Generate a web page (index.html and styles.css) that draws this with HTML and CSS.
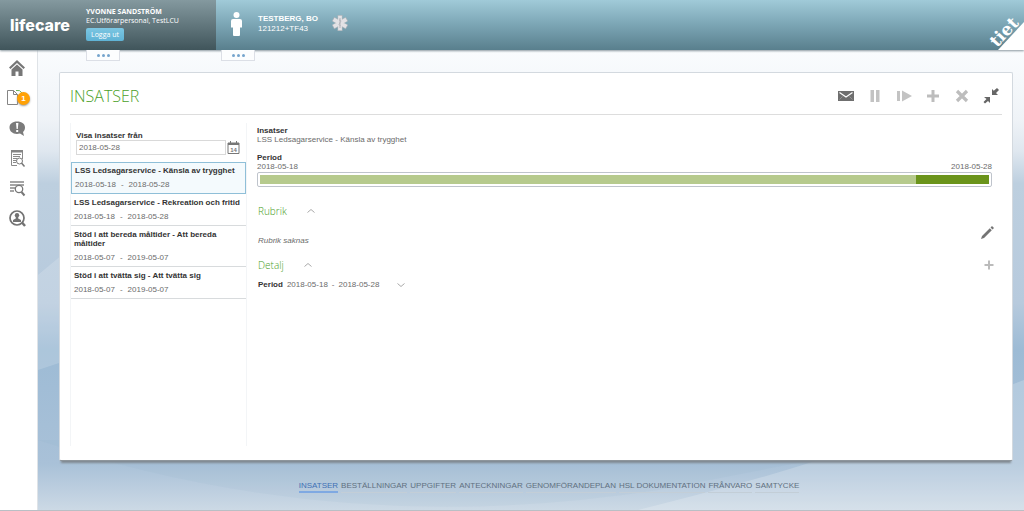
FILE: index.html
```
<!DOCTYPE html>
<html lang="sv">
<head>
<meta charset="utf-8">
<title>Lifecare - Insatser</title>
<link rel="stylesheet" href="styles.css">
</head>
<body>
<div class="page">
  <header class="topbar">
    <div class="user">
      <div class="brand">lifecare</div>
      <div class="user-info">
        <strong>YVONNE SANDSTRÖM</strong>
        <span>EC.Utförarpersonal, TestLCU</span>
        <button class="logout" type="button">Logga ut</button>
      </div>
      <button class="tab" type="button" aria-label="Mer om användaren"><i></i><i></i><i></i></button>
    </div>
    <div class="client">
      <svg class="person" viewBox="0 0 11 24" aria-hidden="true"><circle cx="5.500" cy="3" r="3" fill="#fff"/><path fill="#fff" d="M2 7h7q2 0 2 2v6.500H9V23q0 1-1 1H3q-1 0-1-1v-7.500H0V9q0-2 2-2z"/></svg>
      <div class="client-info"><strong>TESTBERG, BO</strong><span>121212+TF43</span></div>
      <svg class="star" viewBox="0 0 16 16" aria-hidden="true"><g stroke="#a9b3ba" stroke-width="5"><path d="M8 0v16M1 4l14 8M15 4L1 12"/></g><g stroke="#e3e2e5" stroke-width="3.800"><path d="M8 .7v14.600M1.600 4.300l12.800 7.400M14.400 4.300L1.600 11.700"/></g><path d="M8 3v10M7 5q3 0 1 2.500T8.500 11" stroke="#b4b5bb" fill="none"/></svg>
      <svg class="corner" viewBox="0 0 40 50" role="img" aria-label="tieto"><path fill="#fff" d="M14 50L40 22v28z"/><text class="corner-text" transform="translate(13 48) rotate(-47)">tiet</text></svg>
      <button class="tab" type="button" aria-label="Mer om klienten"><i></i><i></i><i></i></button>
    </div>
  </header>
  <div class="body">
    <nav class="rail" aria-label="Huvudmeny">
      <a href="#" aria-label="Hem"><svg viewBox="0 0 18 18"><path fill="#777" d="M9 1l8 7.500-1.500 1.500L9 4 2.500 10 1 8.500z"/><path fill="#777" d="M3.500 10.500L9 5.500l5.500 5V17h-4v-4.500h-3V17h-4z"/></svg></a>
      <a href="#" aria-label="Dokument"><svg class="wide" viewBox="0 0 18 18"><path fill="#fff" stroke="#858585" d="M-.500 1.500h6l4 4v10h-10z"/><path d="M5.500 1.500v4h4" fill="none" stroke="#858585"/><path d="M8 1.500q4-1 6 2.500" fill="none" stroke="#69b35b"/></svg><span class="badge">1</span></a>
      <a href="#" aria-label="Meddelanden"><svg viewBox="0 0 18 18"><path fill="#7b7b7b" d="M9 2.500c5 0 8 2.500 8 6 0 2-1 3.500-2 4.500l1 4-4-2.500c-6 1.500-10.500-1.500-10.500-6 0-3.500 3-6 7.500-6z"/><path fill="#fff" d="M8 4h2.400L9.800 10H8.600zM8.200 11h2v2h-2z"/></svg></a>
      <a href="#" aria-label="Journal"><svg viewBox="0 0 18 18"><path d="M3.500 1.500h11V10M9 16.500H3.500v-15" fill="none" stroke="#8a8a8a"/><path d="M3 1h12v2.500H3z" fill="#858585"/><path d="M5 5.500h8M5 7.500h7M5 9.500h4M5 11.500h3M5 13.500h3" stroke="#8a8a8a"/><circle cx="11.500" cy="12" r="3" fill="#fff" stroke="#777"/><path d="M13.500 14l3 3.500" stroke="#777" stroke-width="1.500"/></svg></a>
      <a href="#" aria-label="Sök i listan"><svg viewBox="0 0 18 18"><path d="M2 3h14M2 6h14M2 9h5M2 12h4" stroke="#888" stroke-width="1.300"/><circle cx="11" cy="10" r="3.700" fill="#fff" stroke="#777" stroke-width="1.300"/><path d="M13.500 13l3 3.500" stroke="#777" stroke-width="2"/></svg></a>
      <a href="#" aria-label="Sök person"><svg viewBox="0 0 18 18"><circle cx="9" cy="9" r="7" fill="#fff" stroke="#737373" stroke-width="1.700"/><path d="M14 13.500l3 3.500" stroke="#737373" stroke-width="2.500"/><circle cx="9" cy="6.200" r="2.200" fill="#737373"/><path fill="#737373" d="M7.800 8h2.400v1.500l2.800 1.500v2H5v-2l2.800-1.500z"/></svg></a>
    </nav>
    <div class="stage">
      <svg class="backdrop" viewBox="0 0 986 460" preserveAspectRatio="none" aria-hidden="true">
        <path fill="#fff" fill-opacity=".16" d="M0 225L30 200V310L0 320z"/>
        <path fill="#fff" fill-opacity=".2" d="M600 460Q720 430 780 410L986 330V460z"/>
        <path fill="#7fa3c4" fill-opacity=".08" d="M0 390Q300 490 620 440L800 405 300 390z"/>
      </svg>
      <main class="panel">
        <div class="panel-head">
          <h1>INSATSER</h1>
          <div class="tools">
            <button type="button" aria-label="Meddelande"><svg viewBox="0 0 16 16"><path fill="#6f6f6f" d="M0 3h16v10H0z"/><path d="M1.500 4.500L8 9l6.500-4.500" fill="none" stroke="#fff" stroke-width="1.200"/><path d="M1.500 11.500l3-3M14.500 11.500l-3-3" fill="none" stroke="#aaa" stroke-width=".6"/></svg></button>
            <button type="button" aria-label="Pausa"><svg viewBox="0 0 16 16"><path fill="#c3c3c3" d="M3.500 2H7v12H3.500zM9 2h3.500v12H9z"/></svg></button>
            <button type="button" aria-label="Återuppta"><svg viewBox="0 0 16 16"><path fill="#c3c3c3" d="M1 3h3v10H1zM6 2.500L16 8 6 13.500z"/></svg></button>
            <button type="button" aria-label="Lägg till"><svg viewBox="0 0 16 16"><path fill="#bdbdbd" d="M6.500 2h3v4.500H14v3H9.500V14h-3V9.500H2v-3h4.500z"/></svg></button>
            <button type="button" aria-label="Ta bort"><svg viewBox="0 0 16 16"><path d="M3 3l10 10M13 3L3 13" stroke="#bdbdbd" stroke-width="3.200"/></svg></button>
            <button type="button" aria-label="Förminska"><svg viewBox="0 0 16 16"><path fill="#666" d="M9 1l1.800 1.800L14 0l2 2-3 3 2 2H9zM1 9h6v6l-2-2-3 2.500L.500 14l3-3z"/></svg></button>
          </div>
        </div>
        <div class="columns">
          <section class="list">
            <div class="filter">
              <label for="from">Visa insatser från</label>
              <div class="date-row">
                <input id="from" type="text" value="2018-05-28">
                <button type="button" aria-label="Välj datum"><svg viewBox="0 0 13 13"><path d="M1 2h11v10.500H1z" fill="#fff" stroke="#777"/><path fill="#777" d="M1 2h11v2H1z"/><path d="M3.500 0v3M9.500 0v3" stroke="#777"/><text class="cal-text" x="6.500" y="11" text-anchor="middle">14</text></svg></button>
              </div>
            </div>
            <a class="item selected" href="#"><strong>LSS Ledsagarservice - Känsla av trygghet</strong><span class="range"><span>2018-05-18</span><span>-</span><span>2018-05-28</span></span></a>
            <a class="item" href="#"><strong>LSS Ledsagarservice - Rekreation och fritid</strong><span class="range"><span>2018-05-18</span><span>-</span><span>2018-05-28</span></span></a>
            <a class="item" href="#"><strong>Stöd i att bereda måltider - Att bereda måltider</strong><span class="range"><span>2018-05-07</span><span>-</span><span>2019-05-07</span></span></a>
            <a class="item" href="#"><strong>Stöd i att tvätta sig - Att tvätta sig</strong><span class="range"><span>2018-05-07</span><span>-</span><span>2019-05-07</span></span></a>
          </section>
          <section class="detail">
            <dl class="facts">
              <dt>Insatser</dt><dd>LSS Ledsagarservice - Känsla av trygghet</dd>
              <dt>Period</dt><dd class="ends"><span>2018-05-18</span><span>2018-05-28</span></dd>
            </dl>
            <div class="bar"><div class="bar-past"></div><div class="bar-now"></div></div>
            <div class="section-head">
              <h2>Rubrik</h2>
              <button type="button" aria-label="Fäll ihop"><svg viewBox="0 0 8 8"><path d="M.500 5.500L4 2.500l3.500 3" fill="none" stroke="#aaa"/></svg></button>
            </div>
            <div class="empty-row">
              <em>Rubrik saknas</em>
              <button type="button" aria-label="Redigera"><svg viewBox="0 0 14 14"><path fill="#747474" d="M1 13l1-3L9.800 2.200l2 2L4 12zM10.500 1.500L12 0l2 2-1.500 1.500z"/></svg></button>
            </div>
            <div class="section-head detail-head">
              <h2>Detalj</h2>
              <button type="button" aria-label="Fäll ihop"><svg viewBox="0 0 8 8"><path d="M.500 5.500L4 2.500l3.500 3" fill="none" stroke="#aaa"/></svg></button>
              <button class="add" type="button" aria-label="Lägg till"><svg viewBox="0 0 10 10"><path d="M5 .500v9M.500 5h9" stroke="#bbb" stroke-width="2"/></svg></button>
            </div>
            <div class="period-row">
              <strong>Period</strong>
              <span class="range"><span>2018-05-18</span><span>-</span><span>2018-05-28</span></span>
              <button type="button" aria-label="Visa mer"><svg viewBox="0 0 8 8"><path d="M.500 2.500L4 5.500l3.500-3" fill="none" stroke="#aaa"/></svg></button>
            </div>
          </section>
        </div>
      </main>
      <nav class="sections" aria-label="Avsnitt">
        <a class="current" href="#">INSATSER</a>
        <a href="#">BESTÄLLNINGAR</a>
        <a href="#">UPPGIFTER</a>
        <a href="#">ANTECKNINGAR</a>
        <a href="#">GENOMFÖRANDEPLAN</a>
        <a href="#">HSL DOKUMENTATION</a>
        <a href="#">FRÅNVARO</a>
        <a href="#">SAMTYCKE</a>
      </nav>
    </div>
  </div>
</div>
</body>
</html>
```

FILE: styles.css
```
* { box-sizing: border-box; }
body {
  margin: 0;
  font: 8px/9px "Liberation Sans", Arial, sans-serif;
  color: #6b6b6b;
}
a { color: inherit; text-decoration: none; }
button { display: block; padding: 0; border: 0; background: none; font: inherit; cursor: pointer; }
svg { display: block; }
strong { color: #333; }

.page { display: flex; flex-direction: column; min-height: 100vh; border-bottom: 1px solid #b9bfc5; }

/* Top bar */
.topbar { position: relative; z-index: 2; display: flex; height: 50px; color: #fff; box-shadow: 0 1px 2px #8a979e; }
.topbar strong { color: #fff; }
.user {
  position: relative;
  display: flex;
  flex: none;
  width: 216px;
  padding-left: 10px;
  background: linear-gradient(#84999f, #62777d 50%, #40555b);
}
.brand { width: 76px; padding-top: 15px; font: 800 16px/20px Inter, sans-serif; }
.user-info { display: flex; flex-direction: column; align-items: flex-start; padding-top: 7px; font: 7px/9px "Open Sans", sans-serif; }
.logout {
  height: 13px;
  margin-top: 3px;
  padding: 0 5px;
  border-radius: 2px;
  background: linear-gradient(#7cc6e2, #5fb3d5);
  color: #fff;
}
.client {
  position: relative;
  display: flex;
  flex: 1;
  align-items: flex-start;
  padding: 12px 0 0 15px;
  background: linear-gradient(#a0cad8, #7ba5b4 50%, #597f8d);
}
.person { width: 11px; height: 24px; }
.client-info { display: flex; flex-direction: column; margin: 2px 14px 0 16px; line-height: 10px; }
.star { width: 16px; height: 16px; margin-top: 3px; }
.corner { position: absolute; right: 0; bottom: 0; width: 40px; height: 50px; }
.corner-text { font: bold 17px "DejaVu Serif", serif; fill: #fff; }
.tab {
  position: absolute;
  top: 50px;
  left: 86px;
  display: flex;
  align-items: center;
  justify-content: center;
  gap: 2px;
  width: 34px;
  height: 11px;
  border: 1px solid #dcdfe6;
  border-top: 0;
  background: #fcfdfe;
}
.client .tab { left: 5px; }
.tab i { width: 3px; height: 3px; border-radius: 50%; background: #75a4cd; }

/* Page body */
.body { display: flex; flex: 1; }
.rail {
  display: flex;
  flex: none;
  flex-direction: column;
  gap: 12px;
  width: 38px;
  padding: 9px 0 0 8px;
  border-right: 1px solid #dfe3e7;
  background: #fff;
}
.rail a { position: relative; width: 18px; height: 18px; }
.rail svg { width: 18px; height: 18px; }
.rail .wide { overflow: visible; }
.badge {
  position: absolute;
  top: 3px;
  left: 9px;
  width: 13px;
  height: 13px;
  border-radius: 50%;
  background: #ffa106;
  box-shadow: 0 1px 2px #999;
  color: #fff;
  font-weight: bold;
  line-height: 13px;
  text-align: center;
}
.stage {
  position: relative;
  display: flex;
  flex: 1;
  flex-direction: column;
  min-width: 0;
  padding: 22px 11px 0 21px;
  background: linear-gradient(#fafcfe, #eff3f7 15%, #dfe7ef 22%, #bdcfdf 29%, #b7cadd 55%, #9dbbd5 65%, #a9c1d8 90%, #ccd9e5);
}
.backdrop { position: absolute; inset: 0; width: 100%; height: 100%; }
.panel {
  position: relative;
  display: flex;
  flex: 1;
  flex-direction: column;
  padding: 0 10px 14px;
  border: 1px solid #d3d9df;
  border-bottom-color: #8d959c;
  border-radius: 2px;
  background: #fff;
  box-shadow: 0 4px 2px -2px #808990;
}
.panel-head {
  display: flex;
  align-items: center;
  justify-content: space-between;
  height: 42px;
  padding-top: 4px;
  border-bottom: 1px solid #ddd;
}
h1, h2 { margin: 0; color: #4ba028; font-family: "Open Sans", sans-serif; font-weight: 300; }
h1 { font-size: 16px; line-height: 24px; }
.tools { display: flex; gap: 13px; padding-right: 3px; }
.tools svg { width: 16px; height: 16px; }

.columns { display: flex; flex: 1; padding-top: 8px; }
.list { flex: none; width: 177px; border: solid #f3f5f7; border-width: 0 1px; }
.filter { padding: 8px 5px 7px; }
.filter label { display: block; color: #333; font-weight: bold; }
.date-row { display: flex; align-items: center; gap: 1px; }
.date-row input {
  width: 150px;
  height: 15px;
  padding: 0 2px;
  border: 1px solid #d9d9d9;
  background: #fff;
  color: #6b6b6b;
  font: inherit;
}
.date-row svg { width: 13px; height: 13px; }
.cal-text { font: bold 6px "Liberation Sans", sans-serif; fill: #777; }
.item { display: block; padding: 4px 3px; border-bottom: 1px solid #d8dbdd; }
.item strong { display: block; margin-bottom: 5px; }
.item .range { line-height: 9px; }
.selected { padding: 3px 3px 4px; border: 1px solid #8fbfd8; background: #f4fafd; }
.range { display: flex; gap: 5px; }

.detail { flex: 1; min-width: 0; padding: 3px 10px 0; }
.facts { margin: 0; }
.facts dt { color: #333; font-weight: bold; }
.facts dd { margin: 0 0 9px; }
.facts .ends { display: flex; justify-content: space-between; margin: 0 0 1px; }
.bar { display: flex; height: 15px; padding: 2px; border: 1px solid #bfc4cc; border-radius: 2px; background: #fff; }
.bar-past { flex: 9; background: #b6ca8d; }
.bar-now { flex: 1; background: #6b941b; }
.section-head { display: flex; align-items: center; gap: 20px; height: 16px; margin: 16px -2px 0 1px; }
h2 { font-size: 10px; line-height: 16px; }
.section-head svg, .period-row svg { width: 8px; height: 8px; }
.empty-row { display: flex; align-items: center; justify-content: space-between; height: 28px; margin: 0 -2px 0 1px; }
.empty-row em { padding-top: 14px; }
.empty-row svg { width: 14px; height: 14px; }
.detail-head { margin-top: 10px; }
.section-head .add { margin-left: auto; }
.section-head .add svg { width: 10px; height: 10px; }
.period-row { display: flex; align-items: center; gap: 4px; margin: 7px 0 0 1px; }
.period-row .range { gap: 4px; }
.period-row button { margin-left: 14px; }

/* Section links */
.sections {
  position: relative;
  display: flex;
  flex-wrap: wrap;
  justify-content: center;
  gap: 3px;
  padding: 20px 0 17px 26px;
  color: #5f7080;
}
.sections a { height: 12px; border-bottom: 1px solid #c3ced7; }
.sections .current { border-bottom: 2px solid #7fa9e2; color: #3f70b5; }
```
